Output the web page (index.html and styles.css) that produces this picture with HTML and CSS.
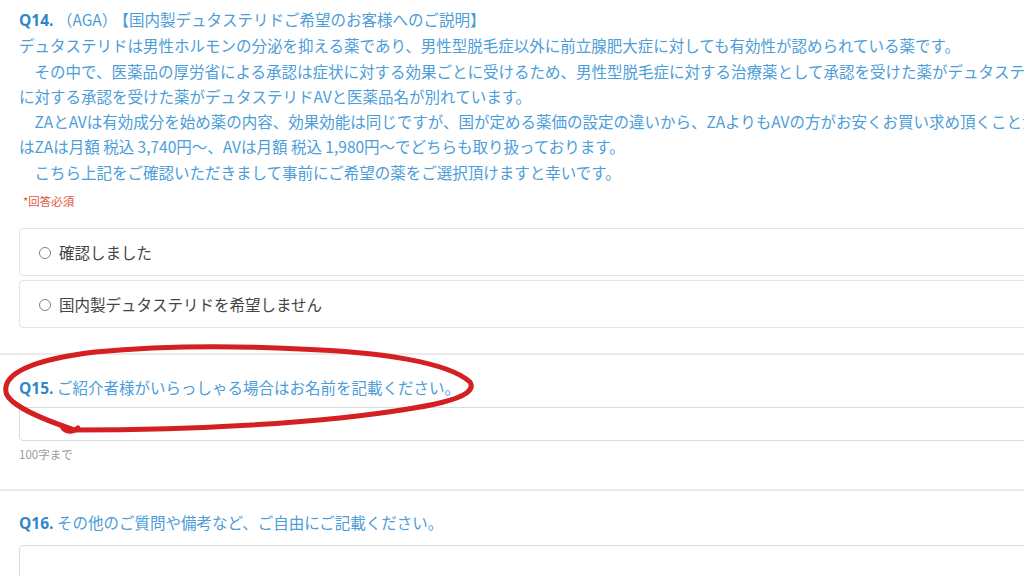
FILE: index.html
```html
<!DOCTYPE html>
<html lang="ja">
<head>
<meta charset="utf-8">
<link rel="stylesheet" href="styles.css">
</head>
<body>
<div class="page">
  <section class="q q14">
    <div class="lines">
      <div class="line title"><span class="qn">Q14.</span> <span class="paren">（AGA）</span>【国内製デュタステリドご希望のお客様へのご説明】</div>
      <div class="line">デュタステリドは男性ホルモンの分泌を抑える薬であり、男性型脱毛症以外に前立腺肥大症に対しても有効性が認められている薬です。</div>
      <div class="line">　その中で、医薬品の厚労省による承認は症状に対する効果ごとに受けるため、男性型脱毛症に対する治療薬として承認を受けた薬がデュタステリドZA、前立腺肥大症</div>
      <div class="line">に対する承認を受けた薬がデュタステリドAVと医薬品名が別れています。</div>
      <div class="line">　ZAとAVは有効成分を始め薬の内容、効果効能は同じですが、国が定める薬価の設定の違いから、ZAよりもAVの方がお安くお買い求め頂くことが可能です。価格</div>
      <div class="line">はZAは月額 税込 3,740円～、AVは月額 税込 1,980円～でどちらも取り扱っております。</div>
      <div class="line">　こちら上記をご確認いただきまして事前にご希望の薬をご選択頂けますと幸いです。</div>
    </div>
    <div class="required">*回答必須</div>
    <div class="options">
      <label class="option"><span class="radio"></span><span>確認しました</span></label>
      <label class="option"><span class="radio"></span><span>国内製デュタステリドを希望しません</span></label>
    </div>
  </section>
  <section class="q q15">
    <div class="line title"><span class="qn">Q15.</span> ご紹介者様がいらっしゃる場合はお名前を記載ください。</div>
    <div class="input"></div>
    <div class="note">100字まで</div>
  </section>
  <section class="q q16">
    <div class="line title"><span class="qn">Q16.</span> その他のご質問や備考など、ご自由にご記載ください。</div>
    <div class="textarea"></div>
  </section>
</div>
<svg class="scribble" width="1024" height="576" viewBox="0 0 1024 576">
  <path d="M 72 429 C 45 420 8 405 6 392 C 3 374 30 360 95 352 C 170 345 240 346 300 349 C 380 352 448 362 470 382 C 480 398 430 408 340 418 C 240 428 130 430 72 430" fill="none" stroke="#d41f23" stroke-width="5" stroke-linecap="round" stroke-linejoin="round"/>
  <path d="M 62 426 C 64 432 72 433 78 428" fill="none" stroke="#d41f23" stroke-width="5" stroke-linecap="round"/>
</svg>
</body>
</html>
```
FILE: styles.css
```css
html, body {
  margin: 0;
  padding: 0;
  background: #ffffff;
  overflow: hidden;
}
body {
  width: 1024px;
  height: 576px;
  position: relative;
  font-family: "Noto Sans CJK JP", "Noto Sans", sans-serif;
  color: #4c9dd8;
}
.page {
  width: 1100px;
}
.q {
  padding-left: 19px;
  border-bottom: 2px solid #ebebeb;
}
.q14 {
  padding-top: 7px;
  padding-bottom: 25px;
}
.q15 {
  padding-top: 20px;
  padding-bottom: 27px;
}
.q16 {
  padding-top: 19px;
  border-bottom: none;
}
.line {
  font-size: 15.5px;
  line-height: 25.3px;
  white-space: nowrap;
  letter-spacing: 0;
}
.qn {
  font-weight: 700;
  color: #2f87c9;
  font-family: "Open Sans", "Noto Sans CJK JP", sans-serif;
}
.paren {
  margin-right: 4px;
}
.required {
  margin-top: 8px;
  margin-left: 4px;
  font-size: 11.5px;
  line-height: 16px;
  color: #e0583f;
}
.options {
  margin-top: 19px;
  display: flex;
  flex-direction: column;
  gap: 4px;
}
.option {
  box-sizing: border-box;
  height: 48px;
  border: 1px solid #e4e4e4;
  border-radius: 4px;
  display: flex;
  align-items: center;
  gap: 8px;
  padding-left: 19px;
  font-size: 15.5px;
  color: #444444;
}
.radio {
  width: 12px;
  height: 12px;
  border: 1px solid #808080;
  border-radius: 50%;
  box-sizing: border-box;
  flex: none;
  margin-top: 1px;
}
.input {
  margin-top: 6px;
  box-sizing: border-box;
  height: 34px;
  border: 1px solid #dcdcdc;
  border-radius: 4px;
}
.note {
  margin-top: 5px;
  font-size: 11.5px;
  line-height: 16px;
  color: #9a9a9a;
}
.textarea {
  margin-top: 8px;
  box-sizing: border-box;
  height: 100px;
  border: 1px solid #dcdcdc;
  border-radius: 4px;
}
.scribble {
  position: absolute;
  left: 0;
  top: 0;
  pointer-events: none;
}
```
